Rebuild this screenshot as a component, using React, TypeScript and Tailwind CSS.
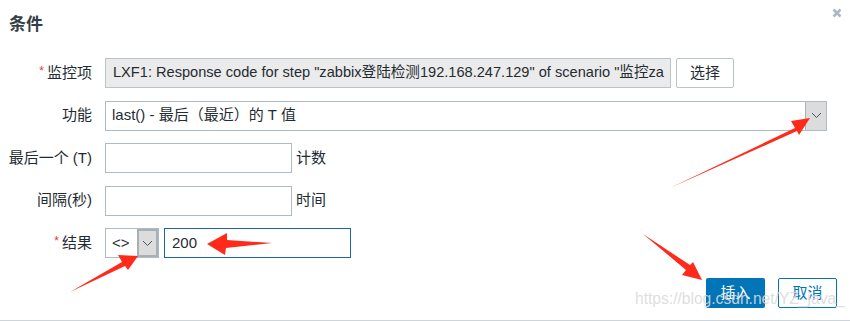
import React from 'react';

const Chevron: React.FC = () => (
  <svg width="11" height="7" viewBox="0 0 11 7">
    <polyline points="1,1 5.5,5.5 10,1" fill="none" stroke="#4a5560" strokeWidth="1" />
  </svg>
);

const Label: React.FC<{ text: string; required?: boolean }> = ({ text, required }) => (
  <div className="w-[92px] shrink-0 text-right text-[15px] text-[#1f2c33]">
    {required && <span className="text-[#e33734] text-[12px] align-top mr-[3px]">*</span>}
    {text}
  </div>
);

const App: React.FC = () => {
  return (
    <div
      className="relative w-[850px] h-[321px] bg-white overflow-hidden border-b border-[#ccd5db]"
      style={{ fontFamily: '"Liberation Sans", Arial, "Noto Sans CJK SC", sans-serif' }}
    >
      {/* Header */}
      <div className="flex items-start justify-between pl-[9px] pr-[8px] pt-[12px]">
        <h4 className="text-[17px] font-bold text-[#333e47] leading-[26px]">条件</h4>
        <svg width="10" height="10" viewBox="0 0 10 10" className="mt-[-4px]">
          <path d="M1.5 1.5 L8.5 8.5 M8.5 1.5 L1.5 8.5" stroke="#aab8c4" strokeWidth="2.6" />
        </svg>
      </div>

      {/* Form */}
      <div className="flex flex-col gap-[12.5px] mt-[20px]">
        <div className="flex items-center gap-[13px] h-[30px]">
          <Label text="监控项" required />
          <div className="h-[30px] w-[566px] shrink-0 bg-[#ebebeb] border border-[#b8c3ca] px-[7px] flex items-center text-[14.6px] text-[#1f2c33] whitespace-nowrap overflow-hidden">
            LXF1: Response code for step "zabbix登陆检测192.168.247.129" of scenario "监控za
          </div>
          <button className="ml-[-8px] h-[30px] w-[58px] border border-[#b8c3ca] rounded-[2px] bg-white text-[15px] text-[#1f2c33]">
            选择
          </button>
        </div>

        <div className="flex items-center gap-[13px] h-[30px]">
          <Label text="功能" />
          <div className="h-[30px] w-[722px] border border-[#acbbc4] flex items-stretch">
            <div className="flex-1 px-[6px] flex items-center text-[15px] text-[#1f2c33]">last() - 最后（最近）的 T 值</div>
            <div className="w-[21px] bg-[#dcdcdc] border-l border-[#acb4ba] flex items-center justify-center">
              <Chevron />
            </div>
          </div>
        </div>

        <div className="flex items-center gap-[13px] h-[30px]">
          <Label text="最后一个 (T)" />
          <div className="h-[30px] w-[187px] border border-[#acbbc4]" />
          <span className="ml-[-9px] text-[15px] text-[#1f2c33]">计数</span>
        </div>

        <div className="flex items-center gap-[13px] h-[30px]">
          <Label text="间隔(秒)" />
          <div className="h-[30px] w-[187px] border border-[#acbbc4]" />
          <span className="ml-[-9px] text-[15px] text-[#1f2c33]">时间</span>
        </div>

        <div className="flex items-center gap-[13px] h-[30px]">
          <Label text="结果" required />
          <div className="h-[30px] w-[54px] border border-[#acbbc4] flex items-stretch">
            <div className="flex-1 flex items-center pl-[6px] text-[15px] text-[#1f2c33]">&lt;&gt;</div>
            <div className="w-[21px] bg-[#dcdcdc] border-2 border-[#a8b0b5] flex items-center justify-center">
              <Chevron />
            </div>
          </div>
          <div className="ml-[-8px] h-[30px] w-[187px] border border-[#1f65a6] px-[7px] flex items-center text-[15px] text-[#1f2c33]">
            200
          </div>
        </div>
      </div>

      {/* Footer buttons */}
      <div className="flex justify-end gap-[13px] pr-[13px] mt-[20px]">
        <button className="h-[30px] w-[59px] rounded-[2px] bg-[#0275b8] text-white text-[15px]">插入</button>
        <button className="h-[30px] w-[59px] rounded-[2px] border border-[#0275b8] bg-white text-[#0275b8] text-[15px]">取消</button>
      </div>

      {/* Watermark */}
      <div className="absolute left-[635px] top-[287px] text-[15.6px] text-[#dadada]/90 whitespace-nowrap pointer-events-none">
        https://blog.csdn.net/YZ_java_
      </div>

      {/* Annotation arrows */}
      <svg className="absolute inset-0 pointer-events-none" width="850" height="321">
        <g fill="#ff2a1a">
          <polygon points="670,188 795,128 791,121 810,118 799,135 797,131" />
          <polygon points="70,292 122,262 118,255 138,256 128,270 125,266" />
          <polygon points="272,243 226,248 225,255 207,244 227,233 227,240" />
          <polygon points="643,234 690,265 693,262 702,280 682,275 686,270" />
        </g>
      </svg>
    </div>
  );
};

export default App;
